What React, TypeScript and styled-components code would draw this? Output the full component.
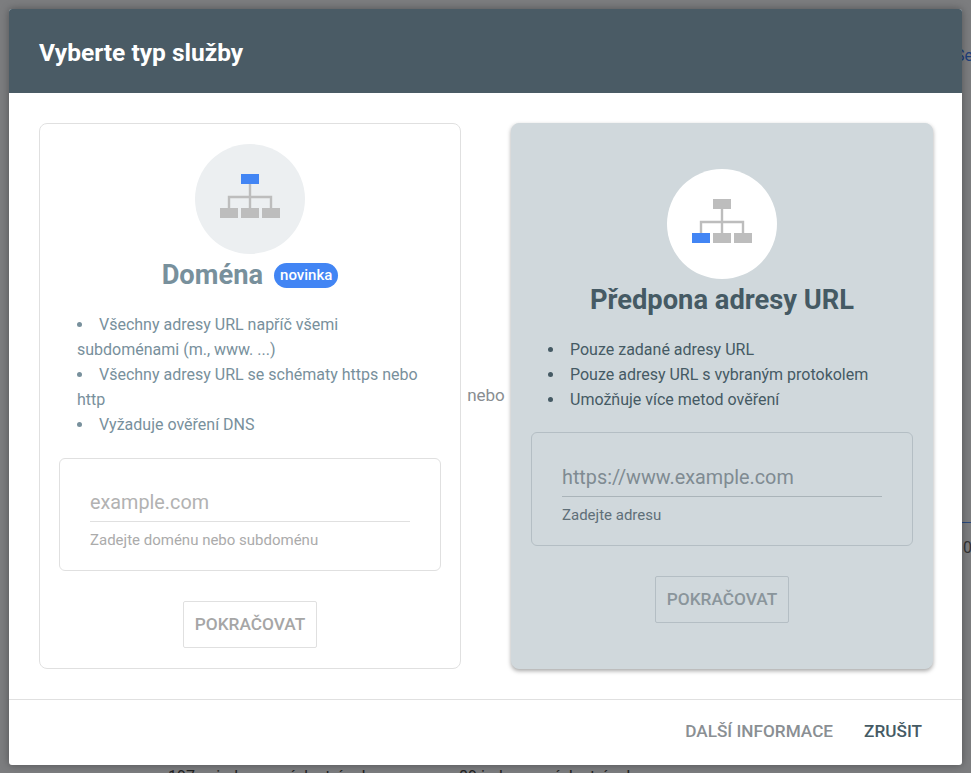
import React from "react"
import styled, { createGlobalStyle } from "styled-components"

const GlobalStyle = createGlobalStyle`
    html, body {
        margin: 0;
        padding: 0;
        font-family: Roboto, "Liberation Sans", sans-serif;
    }
`

const Backdrop = styled.div`
    position: relative;
    box-sizing: border-box;
    width: 971px;
    height: 773px;
    padding: 9px 9px 8px 9px;
    overflow: hidden;
    background: #7c7d7f;
`

// bits of the page that peek out behind the dialog
const BehindText = styled.span<{ $left: number; $top: number; $color: string }>`
    position: absolute;
    left: ${p => p.$left}px;
    top: ${p => p.$top}px;
    font-size: 16px;
    line-height: 20px;
    white-space: nowrap;
    color: ${p => p.$color};
`

const BehindLine = styled.div`
    position: absolute;
    left: 962px;
    top: 522px;
    width: 9px;
    height: 1px;
    background: #2a4a80;
`

const Modal = styled.div`
    position: relative;
    box-sizing: border-box;
    width: 953px;
    height: 756px;
    display: flex;
    flex-direction: column;
    background: #fff;
    border-radius: 3px;
    overflow: hidden;
    box-shadow: 0 0 8px rgba(0, 0, 0, 0.35);
`

const Header = styled.div`
    flex: none;
    box-sizing: border-box;
    height: 84px;
    display: flex;
    align-items: center;
    padding: 3px 0 0 30px;
    background: #4a5b65;
    color: #fff;
    font-size: 24.5px;
    font-weight: 700;
`

const Body = styled.div`
    flex: 1;
    display: flex;
    align-items: stretch;
    padding: 30px 29px 30px 30px;
`

const Card = styled.div<{ $active?: boolean }>`
    box-sizing: border-box;
    width: 422px;
    display: flex;
    flex-direction: column;
    align-items: center;
    justify-content: ${p => (p.$active ? "flex-start" : "center")};
    padding: ${p => (p.$active ? "45px 19px 0" : "0 19px")};
    border-radius: 8px;
    border: 1px solid ${p => (p.$active ? "#d0d8dc" : "#e0e0e0")};
    background: ${p => (p.$active ? "#d0d8dc" : "#fff")};
    box-shadow: ${p => (p.$active ? "0 2px 4px rgba(0, 0, 0, 0.35)" : "none")};
`

const Or = styled.div`
    flex: 1;
    display: flex;
    align-items: center;
    justify-content: center;
    padding-bottom: 2px;
    font-size: 17px;
    color: #888d91;
`

const Circle = styled.div<{ $active?: boolean }>`
    width: 110px;
    height: 110px;
    flex: none;
    display: flex;
    align-items: center;
    justify-content: center;
    border-radius: 50%;
    background: ${p => (p.$active ? "#fff" : "#eceff1")};

    svg {
        margin-bottom: 6px;
    }
`

const TitleRow = styled.div`
    display: flex;
    align-items: center;
    gap: 11px;
    height: 42px;
    margin-bottom: 16px;
`

const Title = styled.div<{ $active?: boolean }>`
    font-size: 27.3px;
    font-weight: 700;
    color: ${p => (p.$active ? "#455a64" : "#78909c")};
`

const Badge = styled.span`
    height: 25px;
    padding: 0 6px;
    display: flex;
    align-items: center;
    border-radius: 13px;
    background: #4285f4;
    color: #fff;
    font-size: 15px;
    font-weight: 500;
`

const Features = styled.ul<{ $active?: boolean }>`
    align-self: stretch;
    margin: 0 0 ${p => (p.$active ? 20 : 21)}px 0;
    padding: 0 15px 0 ${p => (p.$active ? 17 : 18)}px;
    list-style-position: inside;
    font-size: 16px;
    line-height: 25px;
    color: ${p => (p.$active ? "#455a64" : "#78909c")};
`

const Field = styled.div<{ $active?: boolean }>`
    align-self: stretch;
    box-sizing: border-box;
    height: ${p => (p.$active ? 114 : 113)}px;
    padding: ${p => (p.$active ? 31 : 30)}px 30px 0 30px;
    border-radius: 6px;
    border: 1px solid ${p => (p.$active ? "#b4bec4" : "#e0e0e0")};
`

const Placeholder = styled.div<{ $active?: boolean }>`
    height: 33px;
    line-height: 28px;
    box-sizing: border-box;
    border-bottom: 1px solid ${p => (p.$active ? "#aab4b9" : "#e0e0e0")};
    font-size: 19.8px;
    font-weight: 400;
    color: ${p => (p.$active ? "#7f8b92" : "#b2b2b2")};
`

const Hint = styled.div<{ $active?: boolean }>`
    margin-top: 9px;
    font-size: 15px;
    line-height: 18px;
    color: ${p => (p.$active ? "#5f6f78" : "#ababab")};
`

const ContinueButton = styled.div<{ $active?: boolean }>`
    box-sizing: border-box;
    width: 134px;
    height: 47px;
    margin-top: 30px;
    padding-bottom: 2px;
    flex: none;
    display: flex;
    align-items: center;
    justify-content: center;
    border-radius: 2px;
    border: 1px solid ${p => (p.$active ? "#b4bec4" : "#e0e0e0")};
    font-size: 17.3px;
    font-weight: 500;
    color: ${p => (p.$active ? "#8a959b" : "#a6a6a6")};
`

const Footer = styled.div`
    flex: none;
    height: 66px;
    box-sizing: border-box;
    display: flex;
    align-items: center;
    justify-content: flex-end;
    gap: 31px;
    padding: 0 40px 3px 0;
    border-top: 1px solid #e0e0e0;
    font-size: 17.2px;
    font-weight: 500;
`

const FooterAction = styled.span<{ $primary?: boolean }>`
    color: ${p => (p.$primary ? "#455a64" : "#8a8f93")};
`

const SiteIcon = ({ highlight }: { highlight: "top" | "left" }) => (
    <svg width="60" height="44" viewBox="0 0 60 44">
        <path d="M30 10V34M9 34V23H51V34" fill="none" stroke="#bdbdbd" strokeWidth="2.4" />
        <rect x="21" y="0" width="18" height="10" fill={highlight === "top" ? "#4285f4" : "#bdbdbd"} />
        <rect x="0" y="34" width="18" height="10" fill={highlight === "left" ? "#4285f4" : "#bdbdbd"} />
        <rect x="21" y="34" width="18" height="10" fill="#bdbdbd" />
        <rect x="42" y="34" width="18" height="10" fill="#bdbdbd" />
    </svg>
)

const App = () => {
    return (
        <>
            <GlobalStyle />
            <Backdrop>
                <BehindText $left={955} $top={46} $color="#1c3f7c">Se</BehindText>
                <BehindLine />
                <BehindText $left={963} $top={538} $color="#333">0</BehindText>
                <BehindText $left={168} $top={767} $color="#222">197 neindexovaných stránek</BehindText>
                <BehindText $left={459} $top={767} $color="#222">89 indexovaných stránek</BehindText>
                <Modal>
                    <Header>Vyberte typ služby</Header>
                    <Body>
                        <Card>
                            <Circle>
                                <SiteIcon highlight="top" />
                            </Circle>
                            <TitleRow>
                                <Title>Doména</Title>
                                <Badge>novinka</Badge>
                            </TitleRow>
                            <Features>
                                <li>Všechny adresy URL napříč všemi subdoménami (m., www. ...)</li>
                                <li>Všechny adresy URL se schématy https nebo http</li>
                                <li>Vyžaduje ověření DNS</li>
                            </Features>
                            <Field>
                                <Placeholder>example.com</Placeholder>
                                <Hint>Zadejte doménu nebo subdoménu</Hint>
                            </Field>
                            <ContinueButton>POKRAČOVAT</ContinueButton>
                        </Card>
                        <Or>nebo</Or>
                        <Card $active>
                            <Circle $active>
                                <SiteIcon highlight="left" />
                            </Circle>
                            <TitleRow>
                                <Title $active>Předpona adresy URL</Title>
                            </TitleRow>
                            <Features $active>
                                <li>Pouze zadané adresy URL</li>
                                <li>Pouze adresy URL s vybraným protokolem</li>
                                <li>Umožňuje více metod ověření</li>
                            </Features>
                            <Field $active>
                                <Placeholder $active>https://www.example.com</Placeholder>
                                <Hint $active>Zadejte adresu</Hint>
                            </Field>
                            <ContinueButton $active>POKRAČOVAT</ContinueButton>
                        </Card>
                    </Body>
                    <Footer>
                        <FooterAction>DALŠÍ INFORMACE</FooterAction>
                        <FooterAction $primary>ZRUŠIT</FooterAction>
                    </Footer>
                </Modal>
            </Backdrop>
        </>
    )
}

export default App
